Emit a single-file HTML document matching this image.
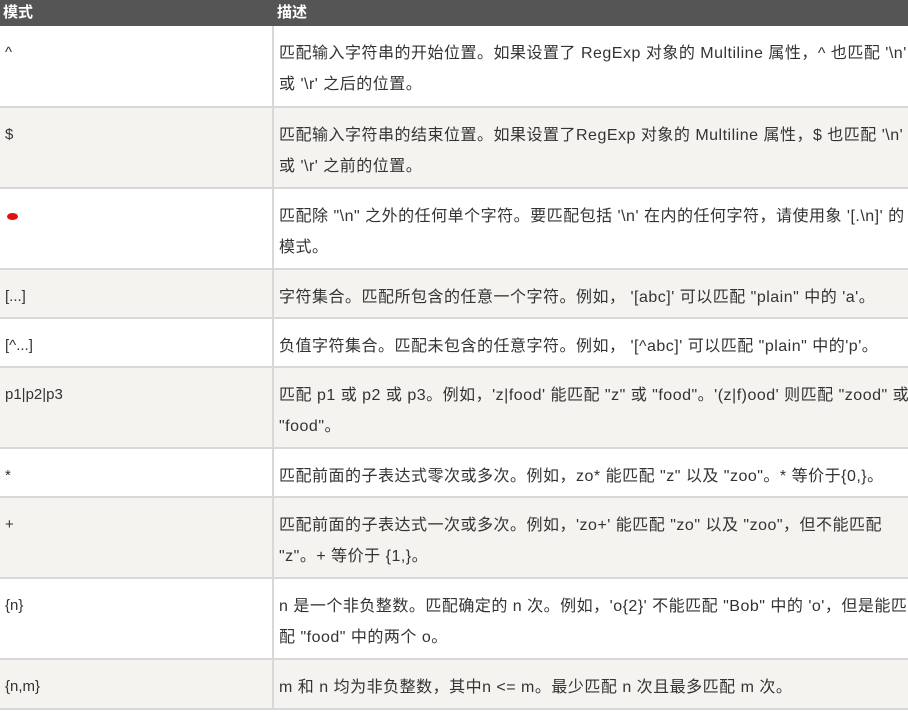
<!DOCTYPE html>
<html><head><meta charset="utf-8"><style>
body{margin:0;background:#fff;font-family:"Liberation Sans","Noto Sans CJK SC",sans-serif;font-size:16px;color:#333;}
.t{position:absolute;left:0;top:0;width:908px;}
.h{height:26px;background:#555;color:#fff;font-weight:bold;position:relative;font-size:15px}
.h span{position:absolute;top:4px;line-height:18px}
.r{position:relative;border-bottom:2px solid #d8d8d8;box-sizing:border-box}
.r .a{position:absolute;left:5px;top:12px;line-height:30px;font-size:15px}
.r .b{position:absolute;left:279px;top:12px;line-height:31px;width:629px;white-space:nowrap;letter-spacing:0.5px}
.r:after{content:"";position:absolute;left:272px;top:0;bottom:-2px;width:2px;background:#d8d8d8}
.w{background:#fff}.g{background:#f4f3f0}
</style></head><body><div class="t">
<div class="h"><span style="left:3px">模式</span><span style="left:277px">描述</span></div>
<div class="r w" style="height:82px"><div class="a">^</div><div class="b">匹配输入字符串的开始位置。如果设置了 RegExp 对象的 Multiline 属性，^ 也匹配 '\n'<br>或 '\r' 之后的位置。</div></div>
<div class="r g" style="height:81px"><div class="a">$</div><div class="b">匹配输入字符串的结束位置。如果设置了RegExp 对象的 Multiline 属性，$ 也匹配 '\n'<br>或 '\r' 之前的位置。</div></div>
<div class="r w" style="height:81px"><div class="a"><span style="display:inline-block;width:11px;height:7px;background:#e01010;border-radius:50%;margin-left:2px"></span></div><div class="b">匹配除 "\n" 之外的任何单个字符。要匹配包括 '\n' 在内的任何字符，请使用象 '[.\n]' 的<br>模式。</div></div>
<div class="r g" style="height:49px"><div class="a">[...]</div><div class="b">字符集合。匹配所包含的任意一个字符。例如， '[abc]' 可以匹配 "plain" 中的 'a'。</div></div>
<div class="r w" style="height:49px"><div class="a">[^...]</div><div class="b">负值字符集合。匹配未包含的任意字符。例如， '[^abc]' 可以匹配 "plain" 中的'p'。</div></div>
<div class="r g" style="height:81px"><div class="a">p1|p2|p3</div><div class="b">匹配 p1 或 p2 或 p3。例如，'z|food' 能匹配 "z" 或 "food"。'(z|f)ood' 则匹配 "zood" 或<br>"food"。</div></div>
<div class="r w" style="height:49px"><div class="a">*</div><div class="b">匹配前面的子表达式零次或多次。例如，zo* 能匹配 "z" 以及 "zoo"。* 等价于{0,}。</div></div>
<div class="r g" style="height:81px"><div class="a">+</div><div class="b">匹配前面的子表达式一次或多次。例如，'zo+' 能匹配 "zo" 以及 "zoo"，但不能匹配<br>"z"。+ 等价于 {1,}。</div></div>
<div class="r w" style="height:81px"><div class="a">{n}</div><div class="b">n 是一个非负整数。匹配确定的 n 次。例如，'o{2}' 不能匹配 "Bob" 中的 'o'，但是能匹<br>配 "food" 中的两个 o。</div></div>
<div class="r g" style="height:50px"><div class="a">{n,m}</div><div class="b">m 和 n 均为非负整数，其中n &lt;= m。最少匹配 n 次且最多匹配 m 次。</div></div>
</div></body></html>
